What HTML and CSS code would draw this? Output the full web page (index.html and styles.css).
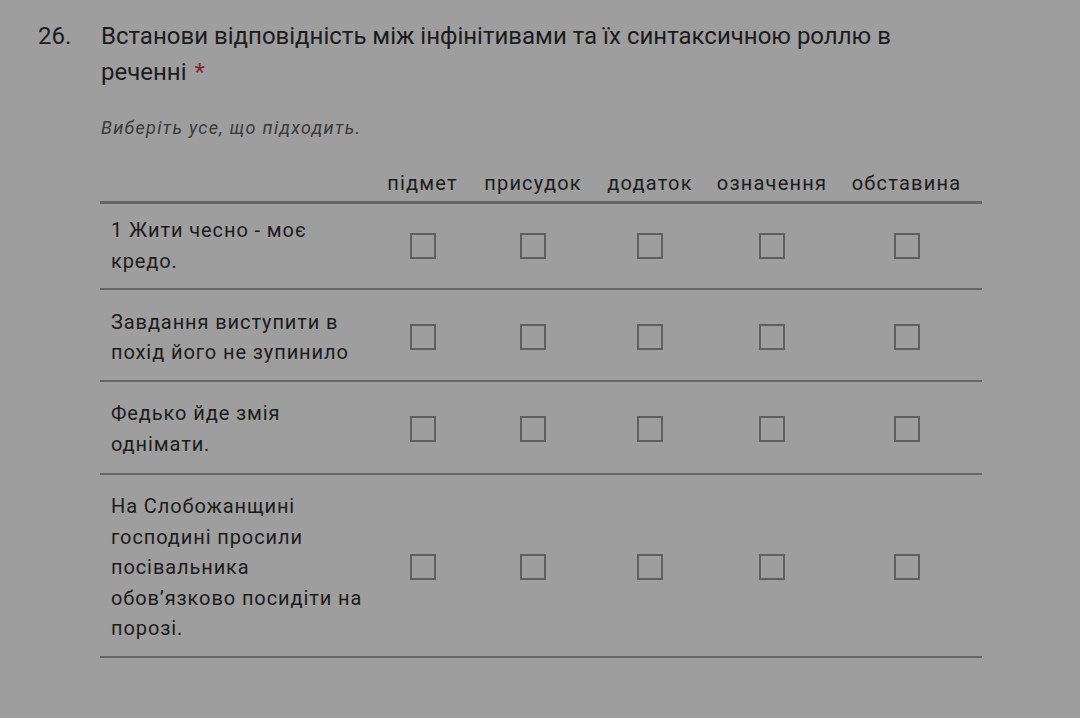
FILE: index.html
```html
<!DOCTYPE html>
<html lang="uk">
<head>
<meta charset="utf-8">
<title>Питання 26</title>
<link rel="stylesheet" href="styles.css">
</head>
<body>
<main class="question">
  <div class="q-head">
    <span class="q-num">26.</span>
    <h1 class="q-title">Встанови відповідність між інфінітивами та їх синтаксичною роллю в реченні<span class="req">*</span></h1>
  </div>
  <p class="q-hint">Виберіть усе, що підходить.</p>
  <div class="grid">
    <div class="row row-head">
      <div class="cell-label"></div>
      <div class="col-h">підмет</div>
      <div class="col-h">присудок</div>
      <div class="col-h">додаток</div>
      <div class="col-h">означення</div>
      <div class="col-h">обставина</div>
    </div>
    <div class="row row-first">
      <div class="cell-label">1 Жити чесно - моє<br>кредо.</div>
      <div class="cell"><span class="box"></span></div>
      <div class="cell"><span class="box"></span></div>
      <div class="cell"><span class="box"></span></div>
      <div class="cell"><span class="box"></span></div>
      <div class="cell"><span class="box"></span></div>
    </div>
    <div class="row">
      <div class="cell-label">Завдання виступити в<br>похід його не зупинило</div>
      <div class="cell"><span class="box"></span></div>
      <div class="cell"><span class="box"></span></div>
      <div class="cell"><span class="box"></span></div>
      <div class="cell"><span class="box"></span></div>
      <div class="cell"><span class="box"></span></div>
    </div>
    <div class="row row-third">
      <div class="cell-label">Федько йде змія<br>однімати.</div>
      <div class="cell"><span class="box"></span></div>
      <div class="cell"><span class="box"></span></div>
      <div class="cell"><span class="box"></span></div>
      <div class="cell"><span class="box"></span></div>
      <div class="cell"><span class="box"></span></div>
    </div>
    <div class="row row-last">
      <div class="cell-label">На Слобожанщині<br>господині просили<br>посівальника<br>обов’язково посидіти на<br>порозі.</div>
      <div class="cell"><span class="box"></span></div>
      <div class="cell"><span class="box"></span></div>
      <div class="cell"><span class="box"></span></div>
      <div class="cell"><span class="box"></span></div>
      <div class="cell"><span class="box"></span></div>
    </div>
  </div>
</main>
</body>
</html>
```
FILE: styles.css
```css
html, body {
  margin: 0;
  padding: 0;
  background: #9e9e9e;
}
body {
  font-family: Roboto, "Noto Sans", sans-serif;
  color: #1c1c1c;
  width: 1080px;
  height: 718px;
  overflow: hidden;
}
.question {
  padding: 18px 98px 0 38px;
}
.q-head {
  display: flex;
}
.q-num {
  width: 63px;
  flex: none;
  font-size: 24px;
  line-height: 36px;
}
.q-title {
  margin: 0;
  font-weight: 400;
  font-size: 24px;
  line-height: 36px;
  max-width: 820px;
}
.req {
  color: #7b2b2b;
  margin-left: 8px;
}
.q-hint {
  margin: 26px 0 0 63px;
  font-size: 18px;
  font-style: italic;
  color: #3a3a3a;
  letter-spacing: 1.3px;
  line-height: 24px;
}
.grid {
  margin: 28px 0 0 62px;
  width: 882px;
}
.row {
  display: grid;
  grid-template-columns: 1fr 97px 124px 110px 134px 135px;
  padding: 16.5px 8px 12px 0;
  border-bottom: 2px solid #666;
  font-size: 20px;
  letter-spacing: 0.9px;
  line-height: 30.5px;
}
.row-head {
  padding: 0 8px 3px 0;
  border-bottom-width: 3px;
  line-height: 30px;
  letter-spacing: 1.2px;
}
.row-first {
  padding-top: 11px;
  padding-bottom: 12px;
}
.row-third {
  padding-bottom: 14px;
}
.row-last {
  padding-top: 16px;
  padding-bottom: 12px;
}
.col-h {
  text-align: center;
  white-space: nowrap;
}
.cell-label {
  padding-left: 11px;
}
.cell {
  display: flex;
  align-items: center;
  justify-content: center;
}
.box {
  width: 22px;
  height: 22px;
  border: 2px solid #5f5f5f;
}
```
